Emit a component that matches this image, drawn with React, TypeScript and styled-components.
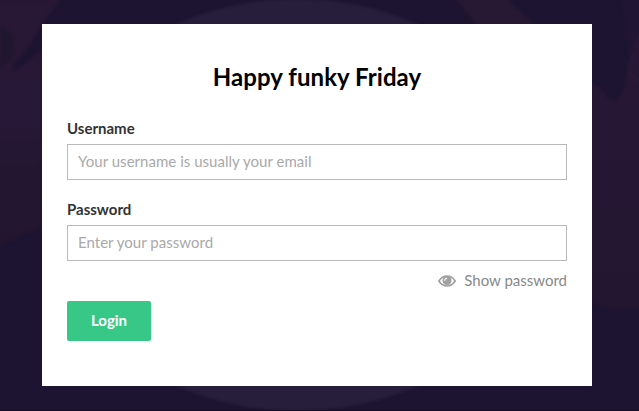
import React, { useState } from 'react';
import styled, { createGlobalStyle } from 'styled-components';

const GlobalStyle = createGlobalStyle`
  * { box-sizing: border-box; }
  body {
    margin: 0;
    background: #1d1431;
    font-family: Lato, sans-serif;
    font-size: 15px;
    line-height: 18px;
    overflow: hidden;
  }
`;

const Page = styled.main`
  position: relative;
  height: 411px;
  padding: 24px 47px 25px 42px;
  overflow: hidden;
`;

const Backdrop = styled.svg`
  position: absolute;
  inset: 0;
  width: 639px;
  height: 411px;
`;

const Card = styled.form`
  position: relative;
  display: flex;
  flex-direction: column;
  height: 362px;
  padding: 38px 25px 0;
  background: #fff;
`;

const Title = styled.h1`
  margin: 0 0 27px;
  color: #000;
  font-size: 24px;
  font-weight: 700;
  letter-spacing: 0.06px;
  line-height: 30px;
  text-align: center;
`;

const Field = styled.div<{ $gap: number }>`
  display: flex;
  flex-direction: column;
  margin-bottom: ${({ $gap }) => $gap}px;
`;

const Label = styled.label`
  margin-bottom: 7px;
  color: #333;
  font-weight: 700;
`;

const Input = styled.input`
  height: 36px;
  padding: 0 10px 2px;
  border: 1px solid #b9b9b9;
  border-radius: 0;
  outline: none;
  color: #333;
  font: inherit;
  letter-spacing: 0.03px;
  &::placeholder {
    color: #a9a9a9;
    opacity: 1;
  }
`;

const Toggle = styled.button`
  display: flex;
  align-self: flex-end;
  align-items: center;
  gap: 8px;
  margin-bottom: 12px;
  padding: 0;
  border: 0;
  background: none;
  color: #888;
  font: inherit;
`;

const EyeIcon = styled.svg`
  width: 18px;
  height: 12px;
  margin-top: 2px;
`;

const LoginButton = styled.button`
  width: 84px;
  height: 40px;
  padding: 0 0 2px;
  border: 0;
  border-radius: 2px;
  background: #37c887;
  color: #fff;
  font: inherit;
  font-weight: 700;
`;

export default function App() {
  const [visible, setVisible] = useState(false);
  return (
    <>
      <GlobalStyle />
      <Page>
        <Backdrop viewBox="0 0 639 411" aria-hidden="true">
          <defs>
            <filter id="soft" x="-10%" y="-10%" width="120%" height="120%" colorInterpolationFilters="sRGB">
              <feGaussianBlur stdDeviation="1.5" />
            </filter>
            <linearGradient id="leftArm" x1="0" y1="0" x2="0" y2="1">
              <stop offset="0" stopColor="#281734" />
              <stop offset=".45" stopColor="#271837" />
              <stop offset=".7" stopColor="#221631" />
              <stop offset="1" stopColor="#23152f" />
            </linearGradient>
            <linearGradient id="rightArm" x1="0" y1="0" x2="0" y2="1">
              <stop offset="0" stopColor="#241935" />
              <stop offset=".35" stopColor="#261734" />
              <stop offset="1" stopColor="#221630" />
            </linearGradient>
          </defs>
          <g filter="url(#soft)">
            <ellipse cx="297" cy="205" rx="252" ry="206" fill="#271e3b" />
            <path d="M-5-5H63L42 25 29 46 18 60 13 63 13 73 42 50V227L20 236-5 250Z" fill="url(#leftArm)" />
            <path d="M0 24 15 37 12 58 0 69Z" fill="#21162f" />
            <path d="M453-5H503L543 32H483Z" fill="#271933" />
            <path d="M590 82 600 88 608 99 616 101 625 88 630 57 639 25 645 25V308Q613 316 585 299Z" fill="url(#rightArm)" />
            <path d="M620-5H645V55L628 53Z" fill="#201533" />
            <path d="M616 101 625 88 632 48 645 20V105Z" fill="#281734" />
            <path d="M634 53 628 66 630 75 640 81" fill="none" stroke="#2e2140" strokeWidth="1" />
          </g>
          <path d="M0 410.5H639" stroke="#140c27" />
        </Backdrop>
        <Card onSubmit={(event) => event.preventDefault()}>
          <Title>Happy funky Friday</Title>
          <Field $gap={20}>
            <Label htmlFor="username">Username</Label>
            <Input id="username" placeholder="Your username is usually your email" />
          </Field>
          <Field $gap={10}>
            <Label htmlFor="password">Password</Label>
            <Input id="password" type={visible ? 'text' : 'password'} placeholder="Enter your password" />
          </Field>
          <Toggle type="button" onClick={() => setVisible(!visible)}>
            <EyeIcon viewBox="0 0 18 12" aria-hidden="true">
              <path d="M.9 6C3 2.7 5.7 1 9 1S15 2.7 17.1 6C15 9.3 12.3 11 9 11S3 9.3.9 6Z" fill="none" stroke="#a0a0a0" strokeWidth="1.7" />
              <circle cx="9" cy="5.5" r="4.5" fill="#a0a0a0" />
              <path d="M6.8 5.2Q6.9 3.6 8.6 3.4" fill="none" stroke="#fff" strokeWidth="1.3" strokeLinecap="round" />
            </EyeIcon>
            Show password
          </Toggle>
          <LoginButton type="submit">Login</LoginButton>
        </Card>
      </Page>
    </>
  );
}
